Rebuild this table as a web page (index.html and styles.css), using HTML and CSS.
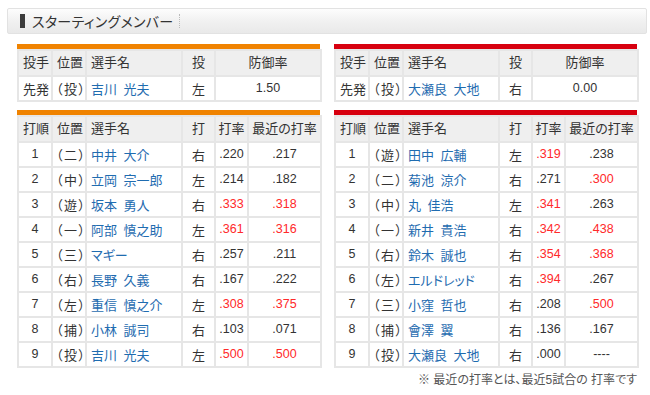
FILE: index.html
```html
<!DOCTYPE html>
<html lang="ja">
<head>
<meta charset="utf-8">
<title>スターティングメンバー</title>
<link rel="stylesheet" href="styles.css">
</head>
<body>
<div class="page">
  <div class="title-bar">
    <span class="marker"></span>
    <h2 class="title">スターティングメンバー</h2>
    <span class="sep"></span>
  </div>

  <div class="columns">
    <div class="team">
      <div class="box orange">
        <table class="tbl">
          <colgroup><col class="c1"><col class="c2"><col class="c3"><col class="c4"><col class="cera"></colgroup>
          <tr><th>投手</th><th>位置</th><th>選手名</th><th class="ctr">投</th><th class="ctr">防御率</th></tr>
          <tr><td>先発</td><td class="pos">（投）</td><td class="name">吉川&ensp;光夫</td><td class="ctr">左</td><td class="ctr num">1.50</td></tr>
        </table>
      </div>
      <div class="box orange">
        <table class="tbl">
          <colgroup><col class="c1"><col class="c2"><col class="c3"><col class="c4"><col class="c5"><col class="c6"></colgroup>
          <tr><th>打順</th><th>位置</th><th>選手名</th><th class="ctr">打</th><th class="ctr">打率</th><th class="ctr">最近の打率</th></tr>
          <tr><td class="ctr num">1</td><td class="pos">（二）</td><td class="name">中井&ensp;大介</td><td class="ctr">右</td><td class="ctr num">.220</td><td class="ctr num">.217</td></tr>
          <tr><td class="ctr num">2</td><td class="pos">（中）</td><td class="name">立岡&ensp;宗一郎</td><td class="ctr">左</td><td class="ctr num">.214</td><td class="ctr num">.182</td></tr>
          <tr><td class="ctr num">3</td><td class="pos">（遊）</td><td class="name">坂本&ensp;勇人</td><td class="ctr">右</td><td class="ctr num hot">.333</td><td class="ctr num hot">.318</td></tr>
          <tr><td class="ctr num">4</td><td class="pos">（一）</td><td class="name">阿部&ensp;慎之助</td><td class="ctr">左</td><td class="ctr num hot">.361</td><td class="ctr num hot">.316</td></tr>
          <tr><td class="ctr num">5</td><td class="pos">（三）</td><td class="name">マギー</td><td class="ctr">右</td><td class="ctr num">.257</td><td class="ctr num">.211</td></tr>
          <tr><td class="ctr num">6</td><td class="pos">（右）</td><td class="name">長野&ensp;久義</td><td class="ctr">右</td><td class="ctr num">.167</td><td class="ctr num">.222</td></tr>
          <tr><td class="ctr num">7</td><td class="pos">（左）</td><td class="name">重信&ensp;慎之介</td><td class="ctr">左</td><td class="ctr num hot">.308</td><td class="ctr num hot">.375</td></tr>
          <tr><td class="ctr num">8</td><td class="pos">（捕）</td><td class="name">小林&ensp;誠司</td><td class="ctr">右</td><td class="ctr num">.103</td><td class="ctr num">.071</td></tr>
          <tr><td class="ctr num">9</td><td class="pos">（投）</td><td class="name">吉川&ensp;光夫</td><td class="ctr">左</td><td class="ctr num hot">.500</td><td class="ctr num hot">.500</td></tr>
        </table>
      </div>
    </div>

    <div class="team">
      <div class="box red">
        <table class="tbl">
          <colgroup><col class="c1"><col class="c2"><col class="c3"><col class="c4"><col class="cera"></colgroup>
          <tr><th>投手</th><th>位置</th><th>選手名</th><th class="ctr">投</th><th class="ctr">防御率</th></tr>
          <tr><td>先発</td><td class="pos">（投）</td><td class="name">大瀬良&ensp;大地</td><td class="ctr">右</td><td class="ctr num">0.00</td></tr>
        </table>
      </div>
      <div class="box red">
        <table class="tbl">
          <colgroup><col class="c1"><col class="c2"><col class="c3"><col class="c4"><col class="c5"><col class="c6"></colgroup>
          <tr><th>打順</th><th>位置</th><th>選手名</th><th class="ctr">打</th><th class="ctr">打率</th><th class="ctr">最近の打率</th></tr>
          <tr><td class="ctr num">1</td><td class="pos">（遊）</td><td class="name">田中&ensp;広輔</td><td class="ctr">左</td><td class="ctr num hot">.319</td><td class="ctr num">.238</td></tr>
          <tr><td class="ctr num">2</td><td class="pos">（二）</td><td class="name">菊池&ensp;涼介</td><td class="ctr">右</td><td class="ctr num">.271</td><td class="ctr num hot">.300</td></tr>
          <tr><td class="ctr num">3</td><td class="pos">（中）</td><td class="name">丸&ensp;佳浩</td><td class="ctr">左</td><td class="ctr num hot">.341</td><td class="ctr num">.263</td></tr>
          <tr><td class="ctr num">4</td><td class="pos">（一）</td><td class="name">新井&ensp;貴浩</td><td class="ctr">右</td><td class="ctr num hot">.342</td><td class="ctr num hot">.438</td></tr>
          <tr><td class="ctr num">5</td><td class="pos">（右）</td><td class="name">鈴木&ensp;誠也</td><td class="ctr">右</td><td class="ctr num hot">.354</td><td class="ctr num hot">.368</td></tr>
          <tr><td class="ctr num">6</td><td class="pos">（左）</td><td class="name">エルドレッド</td><td class="ctr">右</td><td class="ctr num hot">.394</td><td class="ctr num">.267</td></tr>
          <tr><td class="ctr num">7</td><td class="pos">（三）</td><td class="name">小窪&ensp;哲也</td><td class="ctr">右</td><td class="ctr num">.208</td><td class="ctr num hot">.500</td></tr>
          <tr><td class="ctr num">8</td><td class="pos">（捕）</td><td class="name">會澤&ensp;翼</td><td class="ctr">右</td><td class="ctr num">.136</td><td class="ctr num">.167</td></tr>
          <tr><td class="ctr num">9</td><td class="pos">（投）</td><td class="name">大瀬良&ensp;大地</td><td class="ctr">右</td><td class="ctr num">.000</td><td class="ctr num">----</td></tr>
        </table>
      </div>
      <p class="note">※ 最近の打率とは、最近5試合の 打率です</p>
    </div>
  </div>
</div>
</body>
</html>
```

FILE: styles.css
```css
html, body {
  margin: 0;
  padding: 0;
  background: #ffffff;
}

body {
  font-family: "Liberation Sans", "Noto Sans CJK JP", sans-serif;
  color: #333333;
}

.page {
  padding: 8px 3px 0 7px;
}

.title-bar {
  width: 640px;
  height: 26px;
  box-sizing: border-box;
  border: 1px solid #e2e2e2;
  border-radius: 2px;
  background: linear-gradient(to bottom, #fdfdfd 0%, #f1f1f1 50%, #e9e9e9 100%);
  display: flex;
  align-items: center;
  padding-left: 12px;
}

.marker {
  width: 5px;
  height: 14px;
  background: #3c3c3c;
  margin-right: 7px;
}

.title {
  margin: 0;
  font-size: 14px;
  font-weight: normal;
  color: #333333;
  font-feature-settings: "palt";
  letter-spacing: 0.3px;
}

.sep {
  width: 0;
  height: 14px;
  border-left: 1px dotted #bbbbbb;
  margin-left: 6px;
}

.columns {
  display: flex;
  gap: 14px;
  padding: 10px 0 0 10px;
}

.team {
  width: 303px;
  display: flex;
  flex-direction: column;
  gap: 8px;
}

.box {
  width: 303px;
  border-top: 5px solid #f08300;
}

.box.red {
  border-top-color: #d7000f;
}

.tbl {
  width: 303px;
  border-collapse: collapse;
  table-layout: fixed;
  font-size: 13px;
  font-feature-settings: "palt";
}

.tbl th,
.tbl td {
  box-sizing: border-box;
  border: 2px solid #e6e6e6;
  height: 25px;
  padding: 0 0 1px 4px;
  text-align: left;
  font-weight: normal;
  white-space: nowrap;
  overflow: hidden;
  color: #333333;
}

.tbl th {
  background: #efefef;
  height: 26px;
  padding-bottom: 3px;
}

.tbl .ctr {
  text-align: center;
  padding-left: 0;
}

.tbl .pos {
  padding-left: 3px;
  letter-spacing: 1.5px;
}

.tbl .num {
  font-size: 12.5px;
}

.tbl .name {
  color: #1f6cb0;
}

.tbl .hot {
  color: #ff2a2a;
}

.c1 { width: 34px; }
.c2 { width: 34px; }
.c3 { width: 96px; }
.c4 { width: 33px; }
.c5 { width: 33px; }
.c6 { width: 73px; }
.cera { width: 106px; }

.note {
  margin: -3px 0 0;
  line-height: 14px;
  text-align: right;
  font-size: 12px;
  color: #555555;
  font-feature-settings: "palt";
}
```
